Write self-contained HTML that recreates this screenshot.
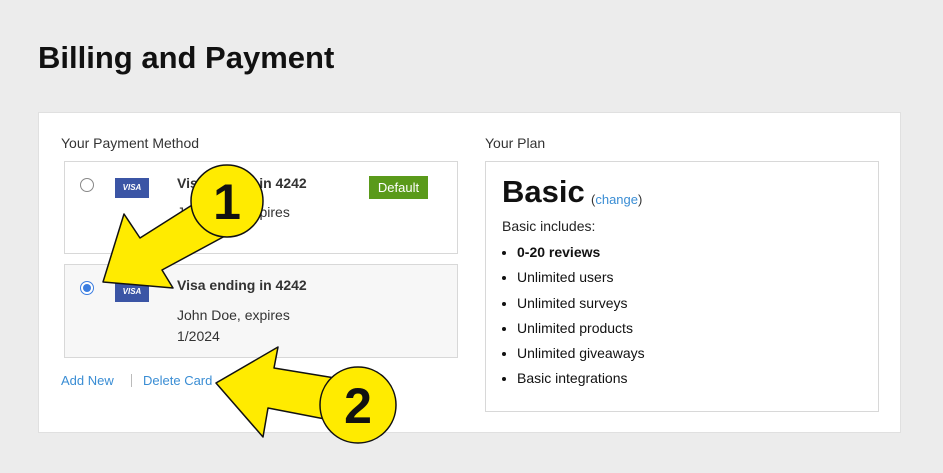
<!DOCTYPE html>
<html><head><meta charset="utf-8"><style>
body{margin:0;width:943px;height:473px;background:#ececec;font-family:"Liberation Sans",sans-serif;position:relative;overflow:hidden;color:#222}
.a{position:absolute;white-space:nowrap}
h1{position:absolute;left:38px;top:40px;margin:0;font-size:31px;font-weight:bold;color:#111}
.panel{position:absolute;left:38px;top:112px;width:863px;height:321px;background:#fff;border:1px solid #e0e0e0;box-sizing:border-box}
.box{position:absolute;border:1px solid #d8d8d8;box-sizing:border-box}
.visa{position:absolute;width:34px;height:20px;background:#3b55a5;color:#fff;font-size:8px;font-weight:bold;font-style:italic;text-align:center;line-height:20px}
.t{font-size:14px;color:#333}
.b{font-size:14px;font-weight:bold;color:#333}
.lnk{color:#3a8dd4;font-size:13px}
ul{position:absolute;left:501px;top:240px;margin:0;padding-left:16px;font-size:14px;color:#111}
li{height:25.3px;line-height:25px}
</style></head><body>
<h1>Billing and Payment</h1>
<div class="panel"></div>
<div class="a t" style="left:61px;top:135px">Your Payment Method</div>
<div class="a t" style="left:485px;top:135px">Your Plan</div>
<div class="box" style="left:64px;top:161px;width:394px;height:93px;background:#fff"></div>
<div class="box" style="left:64px;top:264px;width:394px;height:94px;background:#f7f7f7"></div>
<div class="a" style="left:80px;top:178px;width:12px;height:12px;border:1px solid #888;border-radius:50%;background:#fff"></div>
<div class="a" style="left:80px;top:281px;width:12px;height:12px;border:1px solid #3b7de0;border-radius:50%;background:#fff"><div style="margin:2px;width:8px;height:8px;border-radius:50%;background:#3b7de0"></div></div>
<div class="visa" style="left:115px;top:178px">VISA</div>
<div class="visa" style="left:115px;top:282px">VISA</div>
<div class="a b" style="left:177px;top:175px">Visa ending in 4242</div>
<div class="a t" style="left:177px;top:204px">Jane Doe, expires</div>
<div class="a t" style="left:177px;top:225px">1/2024</div>
<div class="a" style="left:369px;top:176px;width:59px;height:23px;background:#5a9a1a;color:#fff;font-size:13px;text-align:center;line-height:23px">Default</div>
<div class="a b" style="left:177px;top:277px">Visa ending in 4242</div>
<div class="a t" style="left:177px;top:307px">John Doe, expires</div>
<div class="a t" style="left:177px;top:328px">1/2024</div>
<div class="a lnk" style="left:61px;top:373px">Add New</div>
<div class="a" style="left:131px;top:374px;width:1px;height:13px;background:#bbb"></div>
<div class="a lnk" style="left:143px;top:373px">Delete Card</div>
<div class="a lnk" style="left:226px;top:373px">Make Default</div>
<div class="box" style="left:485px;top:161px;width:394px;height:251px;background:#fff"></div>
<div class="a" style="left:502px;top:174px;font-size:31px;font-weight:bold;color:#111">Basic</div>
<div class="a" style="left:591px;top:192px;font-size:13px;color:#333">(<span class="lnk">change</span>)</div>
<div class="a" style="left:502px;top:218px;font-size:14px;color:#222">Basic includes:</div>
<ul><li><b>0-20 reviews</b></li><li>Unlimited users</li><li>Unlimited surveys</li><li>Unlimited products</li><li>Unlimited giveaways</li><li>Basic integrations</li></ul>
<svg class="a" style="left:0;top:0" width="943" height="473">
<g fill="#ffeb00" stroke="#111" stroke-width="1.5" stroke-linejoin="round">
<polygon points="103,282 124,214 140,238 200,200 225,236 162,270 173,288"/>
<circle cx="227" cy="201" r="36"/>
<polygon points="216,383 278,347 274,368 335,378 330,420 268,408 263,437"/>
<circle cx="358" cy="405" r="38"/>
</g>
<text x="227" y="219" font-family="Liberation Sans" font-weight="bold" font-size="50" text-anchor="middle" fill="#111">1</text>
<text x="358" y="423" font-family="Liberation Sans" font-weight="bold" font-size="50" text-anchor="middle" fill="#111">2</text>
</svg>
</body></html>
